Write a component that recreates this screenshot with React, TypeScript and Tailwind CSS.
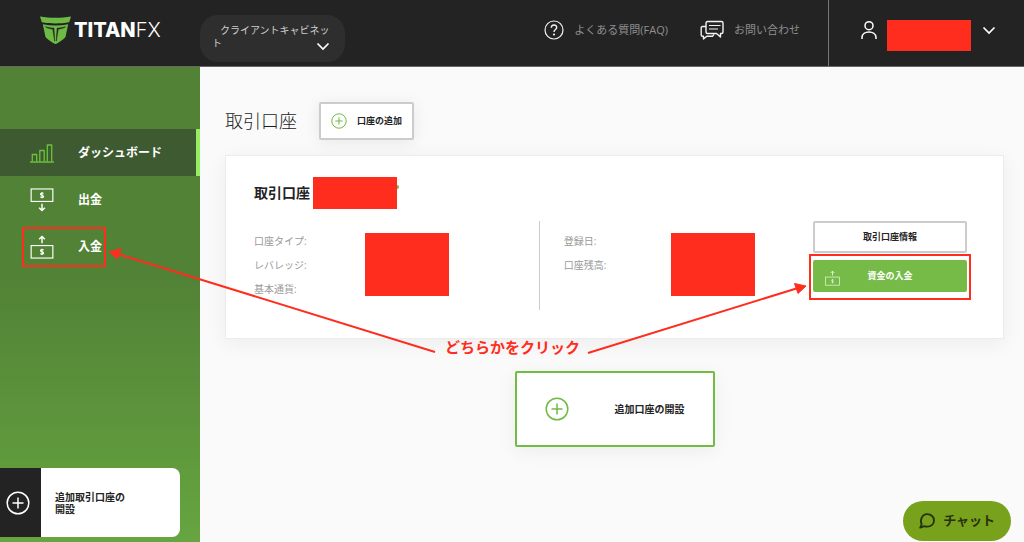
import type { ReactNode } from 'react';

interface IconProps {
  className?: string;
}

function PlusCircle({ className }: IconProps) {
  return (
    <svg className={className} viewBox="0 0 24 24" fill="none" stroke="currentColor" strokeWidth={1.5} aria-hidden="true">
      <circle cx="12" cy="12" r="10.8" />
      <path d="M12 6.5v11M6.5 12h11" />
    </svg>
  );
}

function Chevron({ className }: IconProps) {
  return (
    <svg className={className} viewBox="0 0 20 20" fill="none" stroke="currentColor" strokeWidth={1.7} aria-hidden="true">
      <path d="M4.5 7.5L10 13l5.5-5.5" />
    </svg>
  );
}

function ChartIcon() {
  return (
    <svg className="w-6 h-6" viewBox="0 0 24 24" fill="none" stroke="#6cc23c" strokeWidth={1.3} strokeLinejoin="round" aria-hidden="true">
      <path d="M0 21h24" strokeWidth={1.5} />
      <path d="M2.3 20.500v-7h4.400v7M9.800 20.500V9.500h4.400v11M17.300 20.500V4h4.400v16.500" />
    </svg>
  );
}

// banknote with an arrow: down for withdrawals, up for deposits
function MoneyIcon({ direction, className }: { direction: 'up' | 'down'; className?: string }) {
  const noteY = direction === 'down' ? 1 : 11;
  return (
    <svg className={className} viewBox="0 0 24 25" fill="none" stroke="currentColor" strokeWidth={1.2} aria-hidden="true">
      <rect x="0.7" y={noteY} width="22.6" height="13" />
      <g transform={`translate(0 ${noteY})`}>
        <path d="M13.700 4.800c-.5-.8-3.300-.9-3.300.6 0 1.600 3.300.8 3.300 2.400 0 1.500-2.900 1.400-3.400.4M12 3.200v6.600" />
      </g>
      {direction === 'down' ? (
        <path d="M12 16.500v7M9 20.500l3 3 3-3" strokeWidth={1.5} />
      ) : (
        <path d="M12 8.500v-7M9 4.500l3-3 3 3" strokeWidth={1.5} />
      )}
    </svg>
  );
}

function Logo() {
  return (
    <a href="#" className="flex items-center gap-0.5 h-7 text-white">
      <svg className="w-8 h-7" viewBox="0 0 32 28" aria-hidden="true">
        <path d="M0 .5c10 1.800 21 1.800 31 0l-1.800 5.700c-8.500 1.600-19 1.600-27.400 0z" fill="#6fba45" />
        <path d="M2.800 8.200c8.500 1.700 17 1.700 25.400 0l-2.700 12.800c-2.500 3-6 5-10 7.200-4-2.200-7.500-4.200-10-7.200z" fill="#6fba45" />
        <path d="M5.500 10.800c3 .9 5.800 1.200 8.400 1.300l.8 13-2-12c-3-.2-5.200-.9-7.200-2.300zM25.500 10.800c-3 .9-5.800 1.200-8.400 1.300l-.8 13 2-12c3-.2 5.200-.9 7.200-2.300z" fill="#232323" stroke="#232323" strokeWidth={0.5} />
      </svg>
      <span className="font-['Inter',sans-serif] text-xl leading-7">
        <span className="font-extrabold">TITAN</span>
        <span className="font-light">FX</span>
      </span>
    </a>
  );
}

function Redacted({ className }: IconProps) {
  return <span className={`block shrink-0 bg-[#ff2d1e] ${className}`} />;
}

function Header() {
  return (
    <header className="flex h-[67px] bg-[#232323] border-b border-[#6b6466]">
      <div className="w-[200px] pl-10 pt-4">
        <Logo />
      </div>
      <div className="pt-[15px]">
        <button className="relative w-[145px] h-[47px] px-3 pb-1 rounded-[18px] bg-[#2e2e2e] text-[#cfcfcf] text-[10px] leading-[13px] text-left indent-2">
          クライアントキャビネット
          <Chevron className="absolute right-3 bottom-1.5 w-5 h-5 text-white" />
        </button>
      </div>
      <nav className="ml-auto flex gap-8 pt-5 pr-7 text-[11px] text-[#8f8f8f]">
        <a href="#" className="flex items-center gap-2.5 h-5">
          <svg className="w-5 h-5" viewBox="0 0 20 20" fill="none" stroke="#f2f2f2" strokeWidth={1.2} aria-hidden="true">
            <circle cx="10" cy="10" r="9" />
            <path d="M7.300 7.800c0-3.600 5.400-3.600 5.400-.3 0 2-2.700 2.200-2.700 4.600" strokeWidth={1.4} />
            <circle cx="10" cy="14.500" r="0.5" fill="#f2f2f2" />
          </svg>
          よくある質問(FAQ)
        </a>
        <a href="#" className="flex items-center gap-2.5 h-5">
          <svg className="w-6 h-5" viewBox="0 0 24 20" fill="none" stroke="#f2f2f2" strokeWidth={1.4} strokeLinejoin="round" aria-hidden="true">
            <path d="M7.500 1.500h14a1.500 1.500 0 0 1 1.500 1.500v9a1.500 1.500 0 0 1-1.500 1.500h-1v3.500l-4-3.500h-9A1.500 1.500 0 0 1 6 12V3a1.500 1.500 0 0 1 1.500-1.500z" />
            <path d="M9 5.500h11.500M9 9h9" strokeWidth={1.2} />
            <path d="M6 6.500H2.500A1.300 1.300 0 0 0 1.200 8v7a1.300 1.300 0 0 0 1.300 1.300h1V19l3.300-2.700h5.700l1.500-2" />
          </svg>
          お問い合わせ
        </a>
      </nav>
      <button className="flex items-start w-[196px] pl-[30px] pt-5 border-l border-[#777] text-white" aria-label="アカウント">
        <svg className="w-5 h-5" viewBox="0 0 20 20" fill="none" stroke="currentColor" strokeWidth={1.5} aria-hidden="true">
          <circle cx="10" cy="5.700" r="4" />
          <path d="M3 19v-1.500c0-7.300 14-7.300 14 0V19" />
        </svg>
        <Redacted className="ml-2 w-[84px] h-[31px]" />
        <Chevron className="ml-2 w-5 h-5" />
      </button>
    </header>
  );
}

interface MenuItemProps {
  icon: ReactNode;
  label: string;
  active?: boolean;
  marked?: boolean;
}

function MenuItem({ icon, label, active, marked }: MenuItemProps) {
  return (
    <li>
      <a
        href="#"
        className={`relative flex items-center gap-6 h-[47px] pl-[30px] border-r-4 ${
          active ? 'bg-[#3e5a31] border-[#95ee62]' : 'border-transparent'
        }`}
      >
        {icon}
        {label}
        {marked && <span className="absolute left-[22px] top-1 w-[84px] h-10 border-2 border-[#ff2d1e]" />}
      </a>
    </li>
  );
}

function Sidebar() {
  return (
    <aside className="flex flex-col justify-between w-[200px] shrink-0 pt-[62px] pb-[5px] bg-linear-to-b from-[#528236] from-45% to-[#66a540]">
      <ul className="text-white text-xs font-bold">
        <MenuItem icon={<ChartIcon />} label="ダッシュボード" active />
        <MenuItem icon={<MoneyIcon direction="down" className="w-6 h-6" />} label="出金" />
        <MenuItem icon={<MoneyIcon direction="up" className="w-6 h-6" />} label="入金" marked />
      </ul>
      <button className="flex w-[180px] h-[69px] rounded-r-lg overflow-hidden bg-white text-[#232323] text-[10px] leading-3 font-bold text-left">
        <span className="flex items-center w-[41px] h-full pl-1.5 bg-[#232323] text-white">
          <PlusCircle className="w-6 h-6" />
        </span>
        <span className="self-center pl-3.5">
          追加取引口座の
          <br />
          開設
        </span>
      </button>
    </aside>
  );
}

function AccountCard() {
  return (
    <section className="pl-7 pr-9 pt-[21px] pb-7 bg-white border border-[#ececec] shadow-[0_4px_20px_rgba(0,0,0,0.06)]">
      <h2 className="flex items-center h-8 text-sm font-bold text-[#232323]">
        <span className="pr-[3px]">取引口座</span>
        <Redacted className="w-[84px] h-8" />
        <span className="w-0.5 h-1 mb-3 rounded-r-full bg-[#6fba45]" />
      </h2>
      <div className="grid grid-cols-[23fr_22fr_154px] mt-3 text-[10px] leading-6 text-[#9a9a9a]">
        <div className="flex h-[89px] pt-2 border-r border-[#ccc]">
          <div className="w-[111px]">
            <p>口座タイプ:</p>
            <p>レバレッジ:</p>
            <p>基本通貨:</p>
          </div>
          <Redacted className="mt-1 w-[84px] h-[63px]" />
        </div>
        <div className="flex h-[89px] pt-2 pl-6">
          <div className="w-[107px]">
            <p>登録日:</p>
            <p>口座残高:</p>
          </div>
          <Redacted className="mt-1 w-[84px] h-[63px]" />
        </div>
        <div className="flex flex-col gap-[7px] text-[9px] font-bold">
          <button className="h-8 rounded-xs border-2 border-[#ccc] text-[#232323]">取引口座情報</button>
          <button className="relative h-8 rounded-xs bg-[#76bb48] text-white">
            <MoneyIcon direction="up" className="absolute left-3 bottom-1.5 w-[15px] h-4 text-[#e3f2d9]" />
            資金の入金
            <span className="absolute -left-1 -right-1 -top-1.5 -bottom-2 border-2 border-[#ff2d1e]" />
          </button>
        </div>
      </div>
    </section>
  );
}

// hand-drawn hint pointing at both ways to make a deposit
function Hint() {
  return (
    <div className="absolute left-0 top-0 w-[1024px] h-[542px] pointer-events-none text-[#ff2d1e]">
      <svg className="w-full h-full" viewBox="0 0 1024 542" fill="currentColor" stroke="currentColor" aria-hidden="true">
        <path d="M435 352L118 254M588 353L798 288" strokeWidth={2} />
        <path d="M109.500 252l11.500-3.500-3.500 10.500zM806 286l-11.500-2.500 3.500 10z" />
      </svg>
      <p className="absolute left-[445px] top-[337px] text-[15px] leading-5 font-bold whitespace-nowrap">どちらかをクリック</p>
    </div>
  );
}

export default function App() {
  return (
    <div className="relative flex flex-col min-h-screen bg-[#fafafa] font-['Open_Sans','Noto_Sans_CJK_JP',sans-serif]">
      <Header />
      <div className="flex flex-1">
        <Sidebar />
        <main className="flex-1 pl-[25px] pr-5 pt-[35px]">
          <div className="flex items-center gap-[22px] mb-[15px]">
            <h1 className="text-lg font-light text-[#1c1c1c]">取引口座</h1>
            <button className="flex items-center gap-2.5 h-[38px] pl-2.5 pr-2.5 rounded-xs border-2 border-[#ccc] bg-white text-[#232323] text-[9px] font-bold shadow-[0_2px_16px_rgba(0,0,0,0.08)]">
              <PlusCircle className="w-4 h-4 text-[#6fba45]" />
              口座の追加
            </button>
          </div>
          <AccountCard />
          <button className="flex items-center w-[200px] h-[76px] mx-auto mt-8 px-7 rounded-xs border-2 border-[#72bb44] bg-white text-[#232323] text-[10px] font-bold shadow-[0_4px_20px_rgba(0,0,0,0.06)]">
            <PlusCircle className="w-6 h-6 text-[#72bb44]" />
            <span className="flex-1 text-right">追加口座の開設</span>
          </button>
        </main>
      </div>
      <Hint />
      <button className="fixed right-[13px] bottom-px flex items-center gap-2 h-10 px-4 rounded-full bg-[#78a11c] text-[#26310f] text-[13px] font-bold">
        <svg className="w-4 h-4" viewBox="0 0 16 16" fill="none" stroke="currentColor" strokeWidth={1.8} strokeLinejoin="round" aria-hidden="true">
          <path d="M8.300 1.200c3.900 0 6.700 2.700 6.700 6.200s-2.800 6.300-6.700 6.300c-1 0-2-.2-2.800-.6L1.200 14.600l1.500-3.200C.6 7.500 2.800 1.200 8.300 1.200z" />
        </svg>
        チャット
      </button>
    </div>
  );
}
